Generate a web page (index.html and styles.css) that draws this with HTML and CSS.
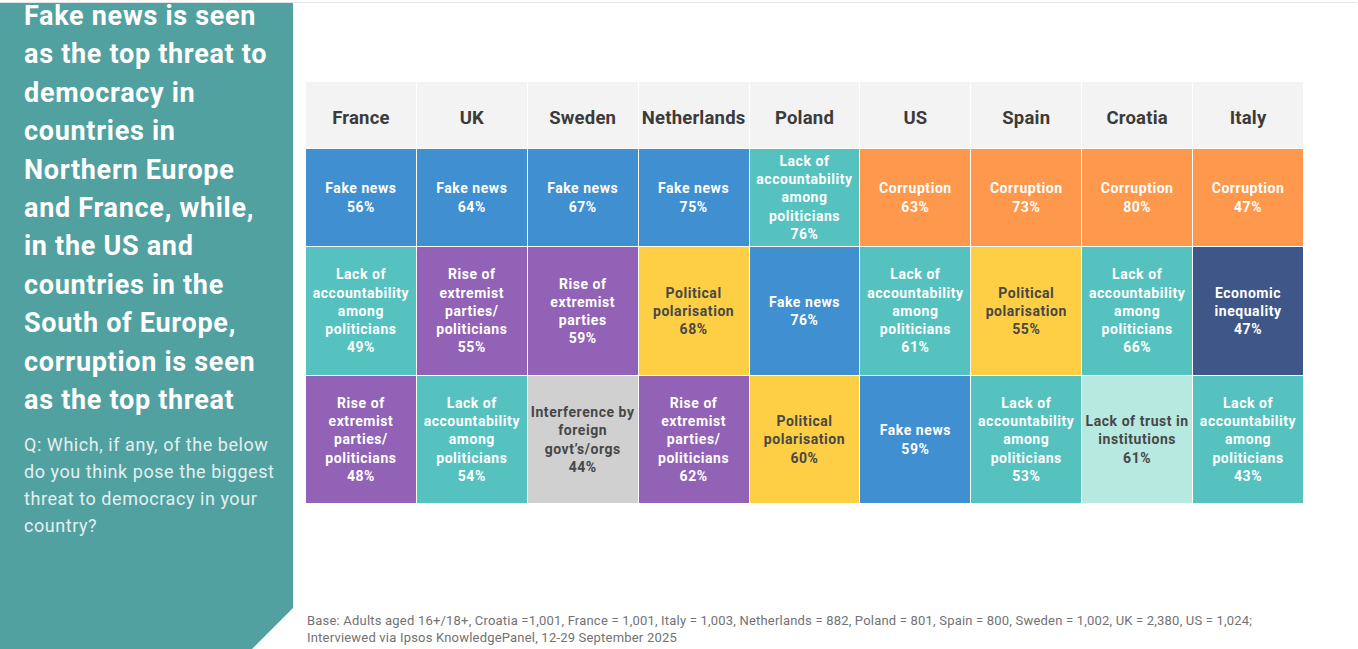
FILE: index.html
```html
<!DOCTYPE html>
<html lang="en">
<head>
<meta charset="utf-8">
<title>Threats to democracy</title>
<link rel="stylesheet" href="styles.css">
</head>
<body>
<div class="slide">
  <aside class="panel">
    <h1 class="title">Fake news is seen<br>as the top threat to<br>democracy in<br>countries in<br>Northern Europe<br>and France, while,<br>in the US and<br>countries in the<br>South of Europe,<br>corruption is seen<br>as the top threat</h1>
    <p class="question">Q: Which, if any, of the below<br>do you think pose the biggest<br>threat to democracy in your<br>country?</p>
  </aside>
  <main class="content">
    <div class="grid">
      <div class="head">France</div>
      <div class="head">UK</div>
      <div class="head">Sweden</div>
      <div class="head">Netherlands</div>
      <div class="head">Poland</div>
      <div class="head">US</div>
      <div class="head">Spain</div>
      <div class="head">Croatia</div>
      <div class="head">Italy</div>

      <div class="cell blue">Fake news<br>56%</div>
      <div class="cell blue">Fake news<br>64%</div>
      <div class="cell blue">Fake news<br>67%</div>
      <div class="cell blue">Fake news<br>75%</div>
      <div class="cell teal">Lack of<br>accountability<br>among<br>politicians<br>76%</div>
      <div class="cell orange">Corruption<br>63%</div>
      <div class="cell orange">Corruption<br>73%</div>
      <div class="cell orange">Corruption<br>80%</div>
      <div class="cell orange">Corruption<br>47%</div>

      <div class="cell teal">Lack of<br>accountability<br>among<br>politicians<br>49%</div>
      <div class="cell purple">Rise of<br>extremist<br>parties/<br>politicians<br>55%</div>
      <div class="cell purple">Rise of<br>extremist<br>parties<br>59%</div>
      <div class="cell yellow">Political<br>polarisation<br>68%</div>
      <div class="cell blue">Fake news<br>76%</div>
      <div class="cell teal">Lack of<br>accountability<br>among<br>politicians<br>61%</div>
      <div class="cell yellow">Political<br>polarisation<br>55%</div>
      <div class="cell teal">Lack of<br>accountability<br>among<br>politicians<br>66%</div>
      <div class="cell navy">Economic<br>inequality<br>47%</div>

      <div class="cell purple">Rise of<br>extremist<br>parties/<br>politicians<br>48%</div>
      <div class="cell teal">Lack of<br>accountability<br>among<br>politicians<br>54%</div>
      <div class="cell grey">Interference by<br>foreign<br>govt’s/orgs<br>44%</div>
      <div class="cell purple">Rise of<br>extremist<br>parties/<br>politicians<br>62%</div>
      <div class="cell yellow">Political<br>polarisation<br>60%</div>
      <div class="cell blue">Fake news<br>59%</div>
      <div class="cell teal">Lack of<br>accountability<br>among<br>politicians<br>53%</div>
      <div class="cell mint">Lack of trust in<br>institutions<br>61%</div>
      <div class="cell teal">Lack of<br>accountability<br>among<br>politicians<br>43%</div>
    </div>
    <p class="base">Base: Adults aged 16+/18+, Croatia =1,001, France = 1,001, Italy = 1,003, Netherlands = 882, Poland = 801, Spain = 800, Sweden = 1,002, UK = 2,380, US = 1,024;<br>Interviewed via Ipsos KnowledgePanel, 12-29 September 2025</p>
  </main>
</div>
</body>
</html>
```

FILE: styles.css
```css
* { box-sizing: border-box; }

html, body {
  margin: 0;
  padding: 0;
  background: #ffffff;
}

body {
  padding-top: 2px;
  font-family: Roboto, "Liberation Sans", sans-serif;
  overflow: hidden;
}

.slide {
  display: flex;
  width: 1357px;
  height: 647px;
  border-top: 1px solid #e4e4e4;
}

.panel {
  flex: 0 0 293px;
  height: 646px;
  background: #52a1a1;
  padding: 0 0 0 24px;
  clip-path: polygon(0 0, 100% 0, 100% 605px, 252px 100%, 0 100%);
  color: #ffffff;
}

.title {
  margin: -6px 0 0 0;
  font-size: 27px;
  line-height: 38.4px;
  font-weight: 700;
  letter-spacing: 0.7px;
  white-space: nowrap;
}

.question {
  margin: 13px 0 0 0;
  font-size: 18px;
  line-height: 26.7px;
  font-weight: 400;
  color: #e3f0f0;
  letter-spacing: 0.55px;
  white-space: nowrap;
}

.content {
  flex: 1;
  display: flex;
  flex-direction: column;
  padding: 79px 0 0 13px;
}

.grid {
  width: 997px;
  display: grid;
  grid-template-columns: repeat(9, 1fr);
  grid-template-rows: 66px 97px 128px 127px;
  gap: 1px;
  background: #ffffff;
}

.head {
  background: #f3f3f3;
  color: #3b3b3b;
  font-size: 18.5px;
  font-weight: 700;
  letter-spacing: 0.2px;
  padding-top: 5px;
  display: flex;
  align-items: center;
  justify-content: center;
  white-space: nowrap;
}

.cell {
  display: flex;
  align-items: center;
  justify-content: center;
  text-align: center;
  font-size: 14px;
  line-height: 18.2px;
  font-weight: 700;
  color: #ffffff;
  white-space: nowrap;
  letter-spacing: 0.55px;
}

.blue { background: #3f8fd1; }
.teal { background: #56c2bf; }
.orange { background: #fd984c; }
.purple { background: #9162b6; }
.yellow { background: #fecf45; color: #474747; }
.navy { background: #3f5689; }
.grey { background: #d0d0d0; color: #474747; }
.mint { background: #b7e9e0; color: #474747; }

.base {
  margin: auto 0 0 1px;
  padding-bottom: 3px;
  font-size: 13px;
  line-height: 17px;
  letter-spacing: 0.2px;
  color: #727272;
  white-space: nowrap;
}
```
